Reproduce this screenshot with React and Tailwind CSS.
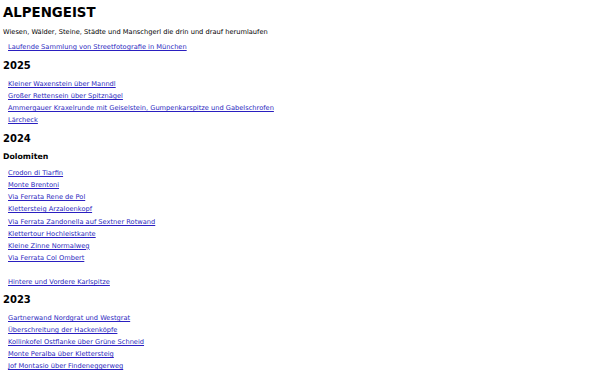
export default function App() {
  const y2025 = [
    'Kleiner Waxenstein über Manndl',
    'Großer Rettensein über Spitznägel',
    'Ammergauer Kraxelrunde mit Geiselstein, Gumpenkarspitze und Gabelschrofen',
    'Lärcheck',
  ]
  const dolo = [
    'Crodon di Tiarfin',
    'Monte Brentoni',
    'Via Ferrata Rene de Pol',
    'Klettersteig Arzaloenkopf',
    'Via Ferrata Zandonella auf Sextner Rotwand',
    'Klettertour Hochleistkante',
    'Kleine Zinne Normalweg',
    'Via Ferrata Col Ombert',
  ]
  const y2023 = [
    'Gartnerwand Nordgrat und Westgrat',
    'Überschreitung der Hackenköpfe',
    'Kollinkofel Ostflanke über Grüne Schneid',
    'Monte Peralba über Klettersteig',
    'Jof Montasio über Findeneggerweg',
    'Monte Sierra',
  ]
  const link = 'text-[#2a1fc0] underline'

  return (
    <div className="h-[375px] overflow-hidden bg-white px-[3px] pt-[1px] text-[6.67px] text-black" style={{ fontFamily: '"DejaVu Sans", sans-serif' }}>
      <h1 className="text-[13.33px] font-bold leading-[23px]">ALPENGEIST</h1>
      <p className="mt-[2px] leading-[12px]">Wiesen, Wälder, Steine, Städte und Manschgerl die drin und drauf herumlaufen</p>
      <ul className="mt-[3px] pl-[5px] leading-[12px]">
        <li><a className={link} href="#">Laufende Sammlung von Streetfotografie in München</a></li>
      </ul>

      <h2 className="mt-[5px] text-[10px] font-bold leading-[16px]">2025</h2>
      <ul className="mt-[4px] pl-[5px] leading-[12px]">
        {y2025.map(t => <li key={t}><a className={link} href="#">{t}</a></li>)}
      </ul>

      <h2 className="mt-[5px] text-[10px] font-bold leading-[16px]">2024</h2>
      <h3 className="mt-[4px] text-[7.8px] font-bold leading-[12px]">Dolomiten</h3>
      <ul className="mt-[4px] pl-[5px] leading-[12.14px]">
        {dolo.map(t => <li key={t}><a className={link} href="#">{t}</a></li>)}
      </ul>
      <ul className="mt-[12px] pl-[5px] leading-[12px]">
        <li><a className={link} href="#">Hintere und Vordere Karlspitze</a></li>
      </ul>

      <h2 className="mt-[4px] text-[10px] font-bold leading-[16px]">2023</h2>
      <ul className="mt-[4px] pl-[5px] leading-[12px]">
        {y2023.map(t => <li key={t}><a className={link} href="#">{t}</a></li>)}
      </ul>
    </div>
  )
}
